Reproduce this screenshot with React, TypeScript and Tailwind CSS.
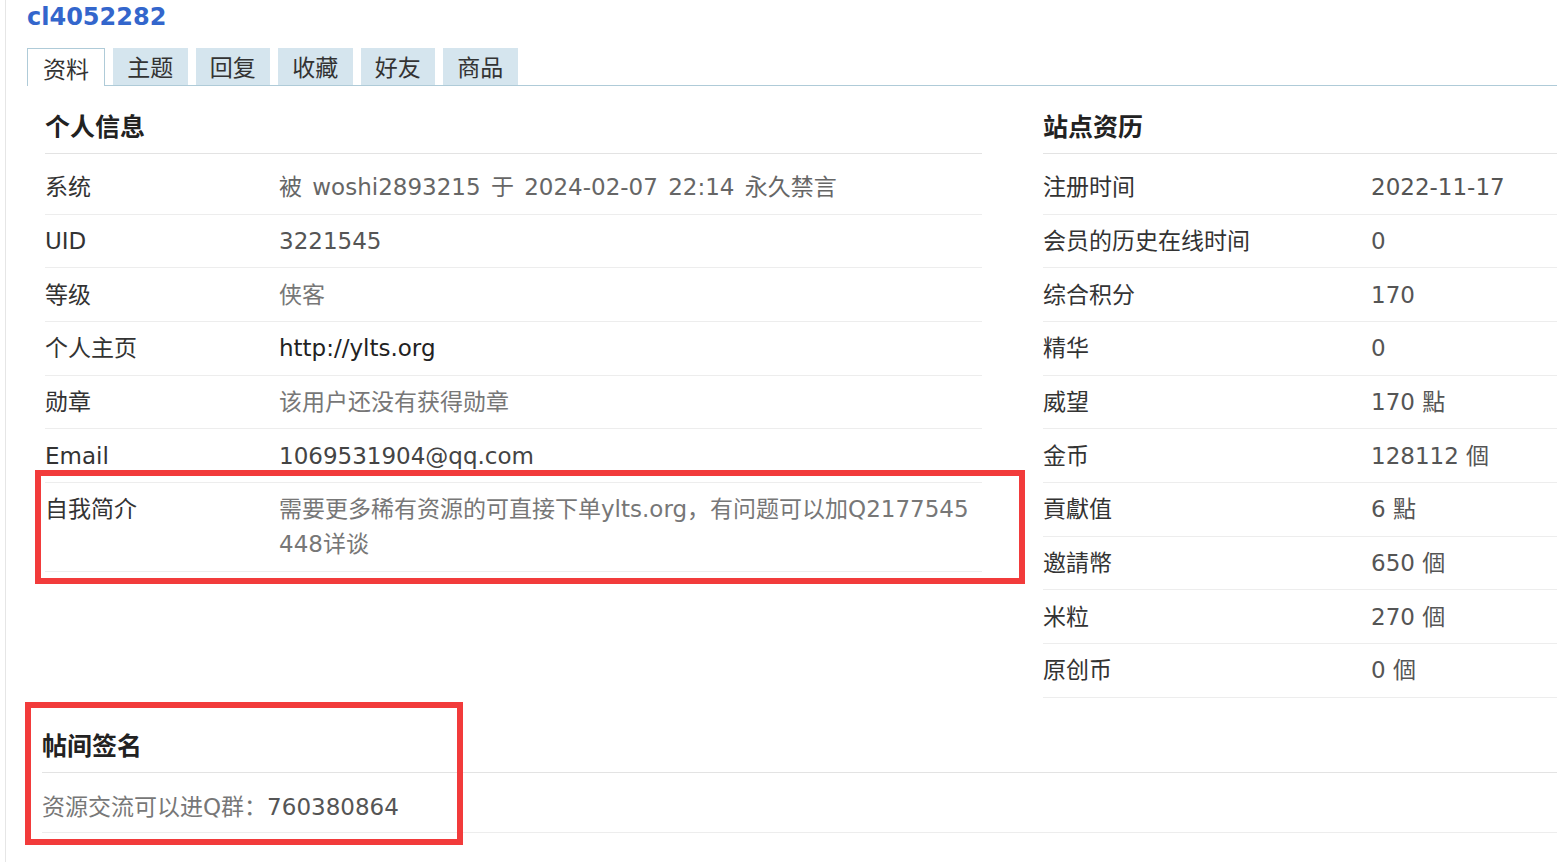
import React from "react";

const font = { fontFamily: '"DejaVu Sans", Verdana, "Noto Sans CJK SC", sans-serif' };

type Row = { label: string; value: React.ReactNode; tone?: string; spaced?: boolean };

const personal: Row[] = [
  { label: "系统", value: "被 woshi2893215 于 2024-02-07 22:14 永久禁言", tone: "text-[#666]", spaced: true },
  { label: "UID", value: "3221545", tone: "text-[#555]" },
  { label: "等级", value: "侠客", tone: "text-[#777]" },
  { label: "个人主页", value: "http://ylts.org", tone: "text-[#222]" },
  { label: "勋章", value: "该用户还没有获得勋章", tone: "text-[#777]" },
  { label: "Email", value: "1069531904@qq.com", tone: "text-[#444]" },
  { label: "自我简介", value: "需要更多稀有资源的可直接下单ylts.org，有问题可以加Q2177545448详谈", tone: "text-[#777]" },
];

const site: Row[] = [
  { label: "注册时间", value: "2022-11-17" },
  { label: "会员的历史在线时间", value: "0" },
  { label: "综合积分", value: "170" },
  { label: "精华", value: "0" },
  { label: "威望", value: "170 點" },
  { label: "金币", value: "128112 個" },
  { label: "貢獻值", value: "6 點" },
  { label: "邀請幣", value: "650 個" },
  { label: "米粒", value: "270 個" },
  { label: "原创币", value: "0 個" },
];

const tabs = ["资料", "主题", "回复", "收藏", "好友", "商品"];

function InfoRow({ row, valueCol }: { row: Row; valueCol: string }) {
  return (
    <div className="flex border-b border-[#ededed] pt-[9.33px] pb-[8.33px] leading-[35px]">
      <div className={`${valueCol} shrink-0 text-[#333]`}>{row.label}</div>
      <div className={`flex-1 break-all ${row.spaced ? "[word-spacing:3px]" : ""} ${row.tone ?? "text-[#555]"}`}>
        {row.value}
      </div>
    </div>
  );
}

function SectionTitle({ children }: { children: React.ReactNode }) {
  return (
    <div className="border-b border-[#e3e3e3] pt-[25px] pb-[8px] text-[25px] font-bold leading-[34px] text-[#222]">
      {children}
    </div>
  );
}

export default function App() {
  return (
    <div className="relative min-h-[862px] overflow-hidden bg-white text-[23px]" style={font}>
      <div className="ml-[5px] min-h-[862px] border-l border-[#e6e6e6] pl-[21px]">
        <div className="h-[34px] text-[24px] font-bold leading-[34px] text-[#3366cc]">cl4052282</div>

        {/* tabs */}
        <div className="mt-[14px] flex h-[38px] items-end gap-[8px] border-b border-[#afcbd8]">
          {tabs.map((t, i) =>
            i === 0 ? (
              <div
                key={t}
                className="relative top-[1px] flex h-[38px] w-[78px] items-center justify-center border border-b-0 border-[#afcbd8] bg-white pt-[5px] leading-none text-[#333]"
              >
                {t}
              </div>
            ) : (
              <div
                key={t}
                className="flex h-[37px] w-[74.5px] items-center justify-center bg-[#d5e5ee] pt-[3px] leading-none text-[#333]"
              >
                {t}
              </div>
            )
          )}
        </div>

        <div className="flex">
          {/* 个人信息 */}
          <div className="ml-[18px] w-[937px] shrink-0">
            <SectionTitle>个人信息</SectionTitle>
            <div className="mt-[7px]">
              {personal.map(r => (
                <InfoRow key={r.label} row={r} valueCol="w-[234px]" />
              ))}
            </div>
          </div>

          {/* 站点资历 */}
          <div className="ml-[61px] flex-1">
            <SectionTitle>站点资历</SectionTitle>
            <div className="mt-[7px]">
              {site.map(r => (
                <InfoRow key={r.label} row={r} valueCol="w-[328px]" />
              ))}
            </div>
          </div>
        </div>

        {/* 帖间签名 */}
        <div className="ml-[15px]">
          <div className="border-b border-[#e3e3e3] pt-[32px] pb-[8px] text-[25px] font-bold leading-[34px] text-[#222]">
            帖间签名
          </div>
          <div className="border-b border-[#ededed] pt-[17px] pb-[7px] leading-[35px] text-[#777]">
            资源交流可以进Q群：<span className="text-[#555]">760380864</span>
          </div>
        </div>
      </div>

      {/* annotation boxes */}
      <div className="pointer-events-none absolute left-[35px] top-[470px] h-[114px] w-[990px] border-[6px] border-[#f23b3b]" />
      <div className="pointer-events-none absolute left-[25px] top-[702px] h-[143px] w-[438px] border-[6px] border-[#f23b3b]" />
    </div>
  );
}
